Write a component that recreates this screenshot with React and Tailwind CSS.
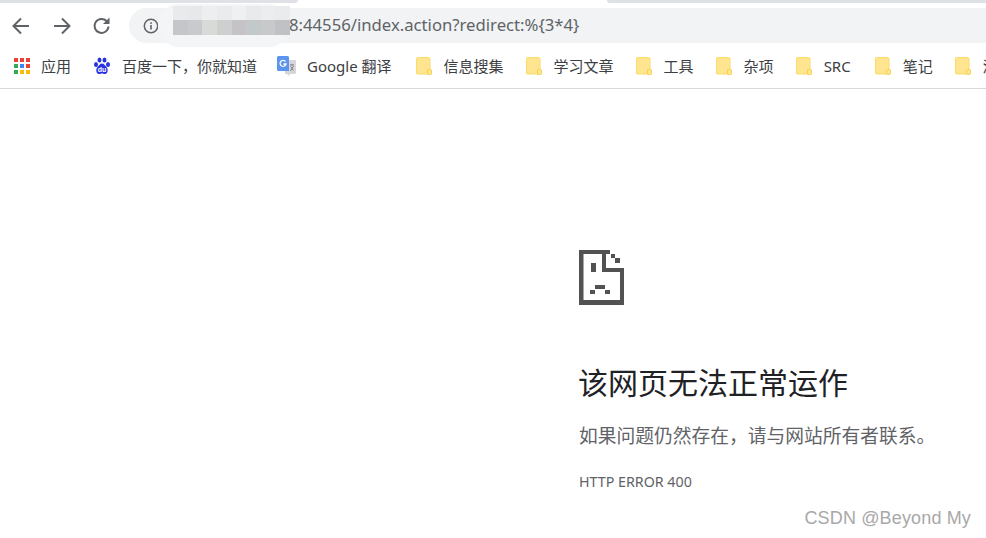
import React from "react";

const font = { fontFamily: '"Noto Sans", "Noto Sans CJK SC", sans-serif' };

const bookmarks = [
  { label: "信息搜集", gap: "mr-[22px]" },
  { label: "学习文章", gap: "mr-[22px]" },
  { label: "工具", gap: "mr-[22px]" },
  { label: "杂项", gap: "mr-[22px]" },
  { label: "SRC", gap: "mr-[24px]" },
  { label: "笔记", gap: "mr-[22px]" },
  { label: "漏洞", gap: "" },
];

const Folder = () => (
  <svg width="16" height="18" viewBox="0 0 16 18" className="shrink-0">
    <path d="M1.500 .5h11a1.500 1.500 0 0 1 1.500 1.500v15h-12.500a1 1 0 0 1-1-1v-14.500a1 1 0 0 1 1-1z" fill="#ffe58f" stroke="#fadb6b" />
    <rect x="11.500" y="12.500" width="4" height="5" rx="1" fill="#ffe58f" stroke="#f5d04e" />
  </svg>
);

const AppsIcon = () => {
  const colors = ["#ea4335", "#ea4335", "#ea4335", "#34a853", "#4285f4", "#ea4335", "#34a853", "#fbbc04", "#fbbc04"];
  return (
    <div className="grid grid-cols-[repeat(3,4px)] grid-rows-[repeat(3,4px)] gap-[2px] shrink-0">
      {colors.map((c, i) => (
        <div key={i} style={{ backgroundColor: c }} />
      ))}
    </div>
  );
};

const BaiduIcon = () => (
  <svg width="18" height="18" viewBox="0 0 18 18" className="shrink-0">
    <ellipse cx="3" cy="7.500" rx="2" ry="2.500" fill="#2932e1" />
    <ellipse cx="6.500" cy="3" rx="2" ry="2.500" fill="#2932e1" />
    <ellipse cx="11.500" cy="3" rx="2" ry="2.500" fill="#2932e1" />
    <ellipse cx="15" cy="7.500" rx="2" ry="2.500" fill="#2932e1" />
    <path d="M9 6.500c2 0 3 2 4.500 3.500 2 2 1.500 7-1.500 7-1.500 0-2-.5-3-.5s-1.500.5-3 .5c-3 0-3.500-5-1.500-7C6 8.500 7 6.500 9 6.500z" fill="#2932e1" />
    <text x="9" y="15" textAnchor="middle" fontSize="7" fontWeight="700" fill="#fff" fontFamily="Liberation Sans, sans-serif">du</text>
  </svg>
);

const TranslateIcon = () => (
  <svg width="20" height="20" viewBox="0 0 20 20" className="shrink-0">
    <path d="M8 4h10a1 1 0 0 1 1 1v12a1 1 0 0 1-1 1h-5l-1 2-2-2H8z" fill="#d5d7da" />
    <path d="M1.500 0h9a1.500 1.500 0 0 1 1.500 1.500V15H1.500A1.500 1.500 0 0 1 0 13.500v-12A1.500 1.500 0 0 1 1.500 0z" fill="#5b95ee" />
    <path d="M8.500 5.500A3 3 0 1 0 9 8H6.500" fill="none" stroke="#fff" strokeWidth="1.300" />
    <path d="M13 9h4M15 8v1M13.500 15l3-5M13.500 10.500l3 4" fill="none" stroke="#777" strokeWidth=".9" />
  </svg>
);

// sad page icon from the chrome error page
const SadPage = () => (
  <svg width="45" height="55" viewBox="0 0 45 55" className="shrink-0">
    <g fill="#525252">
      <rect x="0" y="0" width="31" height="4" />
      <rect x="0" y="0" width="4.500" height="55" />
      <rect x="0" y="50" width="45" height="5" />
      <rect x="41" y="18" width="4" height="37" />
      <rect x="23" y="0" width="4" height="22" />
      <rect x="23" y="18" width="22" height="4" />
      <rect x="32" y="4" width="4" height="4" />
      <rect x="36" y="8" width="5" height="5" />
      <rect x="12" y="13" width="5" height="9" />
      <rect x="16" y="35" width="10" height="4" />
      <rect x="11" y="40" width="5" height="4" />
      <rect x="26" y="40" width="5" height="4" />
    </g>
  </svg>
);

export default function App() {
  return (
    <div className="relative w-[986px] h-[538px] overflow-hidden bg-white" style={font}>
      {/* tab strip */}
      <div className="flex h-[3px]">
        <div className="w-[298px] bg-[#dee1e6] rounded-br-md" />
        <div className="w-[309px]" />
        <div className="flex-1 bg-[#dee1e6] rounded-bl-md" />
      </div>

      {/* toolbar */}
      <div className="flex items-center h-[40px] pt-[5px] pl-[11px]">
        <svg width="20" height="20" viewBox="0 0 20 20" fill="none" stroke="#5f6368" strokeWidth="2" className="shrink-0">
          <path d="M18 10H3M10 2.500 2.500 10l7.500 7.500" />
        </svg>
        <svg width="20" height="20" viewBox="0 0 20 20" fill="none" stroke="#5f6368" strokeWidth="2" className="shrink-0 ml-[21px]">
          <path d="M2 10h15M10 2.500l7.500 7.500-7.500 7.500" />
        </svg>
        <svg width="20" height="20" viewBox="0 0 20 20" fill="none" stroke="#5f6368" strokeWidth="2" className="shrink-0 ml-[20px]">
          <path d="M16.500 10.500a7 7 0 1 1-2-5.500" />
          <path d="M17.500 1.500v6.500H11z" fill="#5f6368" stroke="none" />
        </svg>
        <div className="flex items-center flex-1 h-[35px] ml-[17px] pl-[14px] rounded-l-[18px] bg-[#f1f3f4]">
          <svg width="16" height="16" viewBox="0 0 16 16" fill="none" className="shrink-0">
            <circle cx="8" cy="8" r="6.700" stroke="#5f6368" strokeWidth="1.500" />
            <rect x="7.200" y="7" width="1.600" height="4.500" fill="#5f6368" />
            <rect x="7.200" y="4.300" width="1.600" height="1.600" fill="#5f6368" />
          </svg>
          <span className="ml-[130px] text-[16.700px] leading-none whitespace-nowrap text-[#5f6368]">
            8:44556/index.action?redirect:%{"{"}3*4{"}"}
          </span>
        </div>
      </div>

      {/* bookmarks */}
      <div className="flex items-center h-[46px] pl-[14px] pt-px border-b border-[#d9d9d9] text-[15px] text-[#3c4043] whitespace-nowrap">
        <AppsIcon />
        <span className="ml-[11px] mr-[22px]">应用</span>
        <BaiduIcon />
        <span className="ml-[11px] mr-[20px]">百度一下，你就知道</span>
        <TranslateIcon />
        <span className="ml-[10px] mr-[24px]">Google 翻译</span>
        {bookmarks.map((b) => (
          <div key={b.label} className={`flex items-center shrink-0 ${b.gap}`}>
            <Folder />
            <span className="ml-[12px]">{b.label}</span>
          </div>
        ))}
      </div>

      {/* error page */}
      <div className="pl-[579px] pt-[161px]">
        <SadPage />
        <h1 className="mt-[58px] -ml-px text-[30px] leading-[40px] font-normal text-[#202124] whitespace-nowrap">该网页无法正常运作</h1>
        <p className="mt-[19px] text-[18.750px] leading-[28px] text-[#5f6368] whitespace-nowrap">如果问题仍然存在，请与网站所有者联系。</p>
        <p className="mt-[22px] text-[14.250px] leading-[20px] text-[#5f6368] whitespace-nowrap">HTTP ERROR 400</p>
      </div>

      {/* pixelated smudge over the address */}
      <div className="absolute left-[158px] top-[4px] w-[132px] h-[43px] pt-[2px] pl-[15px] rounded-[21px] bg-[#f4f5f6] blur-[.5px]">
        <div className="flex h-[14px]">
          <div className="w-[15px] bg-[#e8eaec]" />
          <div className="w-[14px] bg-[#e6e8ea]" />
          <div className="w-[15px] bg-[#eceeef]" />
          <div className="w-[15px] bg-[#e9ebec]" />
          <div className="w-[14px] bg-[#eff0f1]" />
          <div className="w-[15px] bg-[#e8eaec]" />
          <div className="w-[14px] bg-[#ecedee]" />
          <div className="w-[15px] bg-[#eaebed]" />
        </div>
        <div className="flex h-[15px]">
          <div className="w-[15px] bg-[#c4c6ca]" />
          <div className="w-[14px] bg-[#c9cacd]" />
          <div className="w-[15px] bg-[#d9dad8]" />
          <div className="w-[15px] bg-[#ced0d0]" />
          <div className="w-[14px] bg-[#c6c3c6]" />
          <div className="w-[15px] bg-[#c3c8cb]" />
          <div className="w-[14px] bg-[#c8c9cb]" />
          <div className="w-[15px] bg-[#bfc1c4]" />
        </div>
      </div>

      <div className="absolute right-[15px] top-[507px] text-[18px] leading-[22px] tracking-[.15px] text-[#a8a8a8] whitespace-nowrap" style={{ fontFamily: '"Liberation Sans", sans-serif' }}>
        CSDN @Beyond My
      </div>
    </div>
  );
}
